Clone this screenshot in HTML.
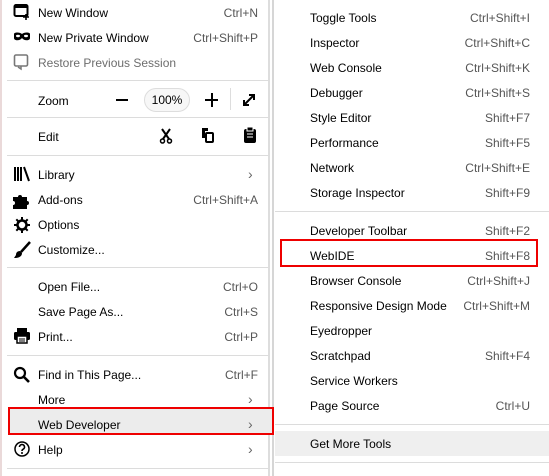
<!DOCTYPE html>
<html><head><meta charset="utf-8"><style>
*{margin:0;padding:0;box-sizing:border-box}
body{width:549px;height:476px;overflow:hidden;background:#fff;font-family:"Segoe UI","Liberation Sans",sans-serif;font-size:12px;color:#000;position:relative}
.l{position:absolute;left:0;top:0;width:270px;height:476px;border-left:2px solid #ead9d9;border-right:2px solid #ddd;background:#fff}
.r{position:absolute;left:272px;top:0;width:277px;height:476px;border-left:2px solid #d6d6d6;background:#fff}
.row{position:absolute;height:25px;line-height:25px;white-space:nowrap;transform:translateY(1px)}
.k{position:absolute;color:#555;text-align:right;transform:translateY(1px)}
.sep{position:absolute;height:1px;background:#dcdcdc}
.arr{position:absolute;color:#666;font-size:14px;transform:translateY(1px)}
svg{position:absolute}
</style></head><body>
<div class="l"></div>
<div class="r"></div>

<div style="position:absolute;left:8px;top:408px;width:264px;height:26px;background:#ececec"></div>
<div style="position:absolute;left:8px;top:407px;width:266px;height:28px;border:2px solid #e00"></div>

<svg style="left:13px;top:3px" width="18" height="18" viewBox="0 0 18 18"><rect x="1.5" y="2" width="13" height="11" rx="1.5" fill="none" stroke="#000" stroke-width="2"/><rect x="1.5" y="2" width="13" height="3" fill="#000"/><path d="M13 11v6M10 14h6" stroke="#000" stroke-width="1.6"/></svg>
<svg style="left:13px;top:30px" width="18" height="14" viewBox="0 0 18 14"><path d="M1 4c0-2 6-2 8 0c2-2 8-2 8 0v4c0 3-6 3-8 0c-2 3-8 3-8 0z" fill="#000"/><ellipse cx="5" cy="6" rx="2" ry="1.2" fill="#fff"/><ellipse cx="13" cy="6" rx="2" ry="1.2" fill="#fff"/></svg>
<svg style="left:13px;top:53px" width="18" height="18" viewBox="0 0 18 18"><rect x="1.5" y="2" width="13" height="11" rx="1.5" fill="none" stroke="#777" stroke-width="1.6"/><path d="M8 13v3l-3-2" stroke="#777" stroke-width="1.5" fill="none"/></svg>
<div class="row" style="left:38px;top:0">New Window</div><div class="k" style="right:291px;top:0;line-height:25px">Ctrl+N</div>
<div class="row" style="left:38px;top:25px">New Private Window</div><div class="k" style="right:291px;top:25px;line-height:25px">Ctrl+Shift+P</div>
<div class="row" style="left:38px;top:50px;color:#6d6d6d">Restore Previous Session</div>
<div class="sep" style="left:7px;top:80px;width:262px"></div>

<div class="row" style="left:38px;top:88px">Zoom</div>
<div style="position:absolute;left:116px;top:99px;width:12px;height:2px;background:#000"></div>
<div style="position:absolute;left:144px;top:88px;width:46px;height:24px;border:1px solid #ddd;border-radius:12px;background:#f7f7f7;text-align:center;line-height:22px">100%</div>
<div style="position:absolute;left:205px;top:99px;width:13px;height:2px;background:#000"></div>
<div style="position:absolute;left:210.5px;top:93px;width:2px;height:14px;background:#000"></div>
<div style="position:absolute;left:230px;top:88px;width:1px;height:22px;background:#ddd"></div>
<svg style="left:241px;top:92px" width="16" height="16" viewBox="0 0 16 16"><path d="M3 13L13 3M8 3h5v5M3 8v5h5" stroke="#000" stroke-width="2" fill="none"/></svg>
<div class="sep" style="left:7px;top:117px;width:262px"></div>

<div class="row" style="left:38px;top:124px">Edit</div>
<svg style="left:158px;top:128px" width="16" height="16" viewBox="0 0 16 16"><path d="M4 1l7 10M12 1L5 11" stroke="#000" stroke-width="2"/><circle cx="4.5" cy="13" r="2" fill="none" stroke="#000" stroke-width="1.5"/><circle cx="11.5" cy="13" r="2" fill="none" stroke="#000" stroke-width="1.5"/></svg>
<svg style="left:200px;top:127px" width="16" height="17" viewBox="0 0 16 17"><path d="M2 1h6v3H5v7H2z" fill="#000"/><rect x="6" y="6" width="7" height="9" rx="1" fill="#fff" stroke="#000" stroke-width="2"/></svg>
<svg style="left:243px;top:126px" width="14" height="18" viewBox="0 0 14 18"><rect x="1" y="3" width="12" height="14" rx="2" fill="#000"/><rect x="4" y="1" width="6" height="4" fill="#000" stroke="#fff" stroke-width="1"/><path d="M4 8h6M4 11h6" stroke="#fff" stroke-width="1"/></svg>
<div class="sep" style="left:7px;top:155px;width:262px"></div>

<svg style="left:13px;top:166px" width="18" height="16" viewBox="0 0 18 16"><path d="M2 1v14M5 1v14M8 1v14M11 1l5 14" stroke="#000" stroke-width="2"/></svg>
<svg style="left:12px;top:191px" width="20" height="18" viewBox="0 0 20 18"><path d="M1 6h5a2 2 0 1 1 4 0h5v4a2 2 0 1 1 0 4v4H1v-4a2 2 0 1 0 0-4z" fill="#000"/></svg>
<svg style="left:13px;top:216px" width="18" height="18" viewBox="0 0 18 18"><circle cx="9" cy="9" r="4.5" fill="none" stroke="#000" stroke-width="2.5"/><path d="M9 1v3M9 14v3M1 9h3M14 9h3M3.3 3.3l2.2 2.2M12.5 12.5l2.2 2.2M3.3 14.7l2.2-2.2M12.5 5.5l2.2-2.2" stroke="#000" stroke-width="2"/></svg>
<svg style="left:13px;top:241px" width="18" height="18" viewBox="0 0 18 18"><path d="M17 1L8 11" stroke="#000" stroke-width="2.5"/><path d="M7 10c-3 0-4 2-4 4l-2 3c4 0 8-1 8-5z" fill="#000"/></svg>
<div class="row" style="left:38px;top:162px">Library</div><div class="arr" style="left:248px;top:165px">›</div>
<div class="row" style="left:38px;top:187px">Add-ons</div><div class="k" style="right:291px;top:187px;line-height:25px">Ctrl+Shift+A</div>
<div class="row" style="left:38px;top:212px">Options</div>
<div class="row" style="left:38px;top:237px">Customize...</div>
<div class="sep" style="left:7px;top:267px;width:262px"></div>

<div class="row" style="left:38px;top:274px">Open File...</div><div class="k" style="right:291px;top:274px;line-height:25px">Ctrl+O</div>
<div class="row" style="left:38px;top:299px">Save Page As...</div><div class="k" style="right:291px;top:299px;line-height:25px">Ctrl+S</div>
<svg style="left:13px;top:328px" width="18" height="16" viewBox="0 0 18 16"><rect x="4" y="0" width="10" height="4" fill="#000"/><rect x="1" y="4" width="16" height="8" rx="1.5" fill="#000"/><rect x="4" y="8" width="10" height="7" fill="#fff" stroke="#000" stroke-width="1.5"/><path d="M6 11h6M6 13h6" stroke="#000"/></svg>
<div class="row" style="left:38px;top:324px">Print...</div><div class="k" style="right:291px;top:324px;line-height:25px">Ctrl+P</div>
<div class="sep" style="left:7px;top:355px;width:262px"></div>

<svg style="left:13px;top:366px" width="18" height="18" viewBox="0 0 18 18"><circle cx="7" cy="7" r="5" fill="none" stroke="#000" stroke-width="2.2"/><path d="M10.5 10.5L16 16" stroke="#000" stroke-width="2.6"/></svg>
<div class="row" style="left:38px;top:362px">Find in This Page...</div><div class="k" style="right:291px;top:362px;line-height:25px">Ctrl+F</div>
<div class="row" style="left:38px;top:387px">More</div><div class="arr" style="left:248px;top:390px">›</div>
<div class="row" style="left:38px;top:412px">Web Developer</div><div class="arr" style="left:248px;top:415px">›</div>
<svg style="left:14px;top:441px" width="16" height="16" viewBox="0 0 16 16"><circle cx="8" cy="8" r="7" fill="none" stroke="#000" stroke-width="1.5"/><path d="M5.5 6a2.5 2.5 0 1 1 3.5 2.3c-.8.4-1 .8-1 1.7" fill="none" stroke="#000" stroke-width="1.6"/><circle cx="8" cy="12" r="1" fill="#000"/></svg>
<div class="row" style="left:38px;top:437px">Help</div><div class="arr" style="left:248px;top:440px">›</div>
<div class="sep" style="left:7px;top:468px;width:262px"></div>

<div class="row" style="left:310px;top:5px">Toggle Tools</div><div class="k" style="right:19px;top:5px;line-height:25px">Ctrl+Shift+I</div>
<div class="row" style="left:310px;top:30px">Inspector</div><div class="k" style="right:19px;top:30px;line-height:25px">Ctrl+Shift+C</div>
<div class="row" style="left:310px;top:55px">Web Console</div><div class="k" style="right:19px;top:55px;line-height:25px">Ctrl+Shift+K</div>
<div class="row" style="left:310px;top:80px">Debugger</div><div class="k" style="right:19px;top:80px;line-height:25px">Ctrl+Shift+S</div>
<div class="row" style="left:310px;top:105px">Style Editor</div><div class="k" style="right:19px;top:105px;line-height:25px">Shift+F7</div>
<div class="row" style="left:310px;top:130px">Performance</div><div class="k" style="right:19px;top:130px;line-height:25px">Shift+F5</div>
<div class="row" style="left:310px;top:155px">Network</div><div class="k" style="right:19px;top:155px;line-height:25px">Ctrl+Shift+E</div>
<div class="row" style="left:310px;top:180px">Storage Inspector</div><div class="k" style="right:19px;top:180px;line-height:25px">Shift+F9</div>
<div class="sep" style="left:275px;top:211px;width:274px"></div>
<div class="row" style="left:310px;top:218px">Developer Toolbar</div><div class="k" style="right:19px;top:218px;line-height:25px">Shift+F2</div>
<div style="position:absolute;left:280px;top:239px;width:258px;height:28px;border:2px solid #e00"></div>
<div class="row" style="left:310px;top:243px">WebIDE</div><div class="k" style="right:19px;top:243px;line-height:25px">Shift+F8</div>
<div class="row" style="left:310px;top:268px">Browser Console</div><div class="k" style="right:19px;top:268px;line-height:25px">Ctrl+Shift+J</div>
<div class="row" style="left:310px;top:293px">Responsive Design Mode</div><div class="k" style="right:19px;top:293px;line-height:25px">Ctrl+Shift+M</div>
<div class="row" style="left:310px;top:318px">Eyedropper</div>
<div class="row" style="left:310px;top:343px">Scratchpad</div><div class="k" style="right:19px;top:343px;line-height:25px">Shift+F4</div>
<div class="row" style="left:310px;top:368px">Service Workers</div>
<div class="row" style="left:310px;top:393px">Page Source</div><div class="k" style="right:19px;top:393px;line-height:25px">Ctrl+U</div>
<div class="sep" style="left:275px;top:424px;width:274px"></div>
<div style="position:absolute;left:275px;top:431px;width:274px;height:25px;background:#efefef"></div>
<div class="row" style="left:310px;top:431px">Get More Tools</div>
<div class="sep" style="left:275px;top:462px;width:274px"></div>
</body></html>
